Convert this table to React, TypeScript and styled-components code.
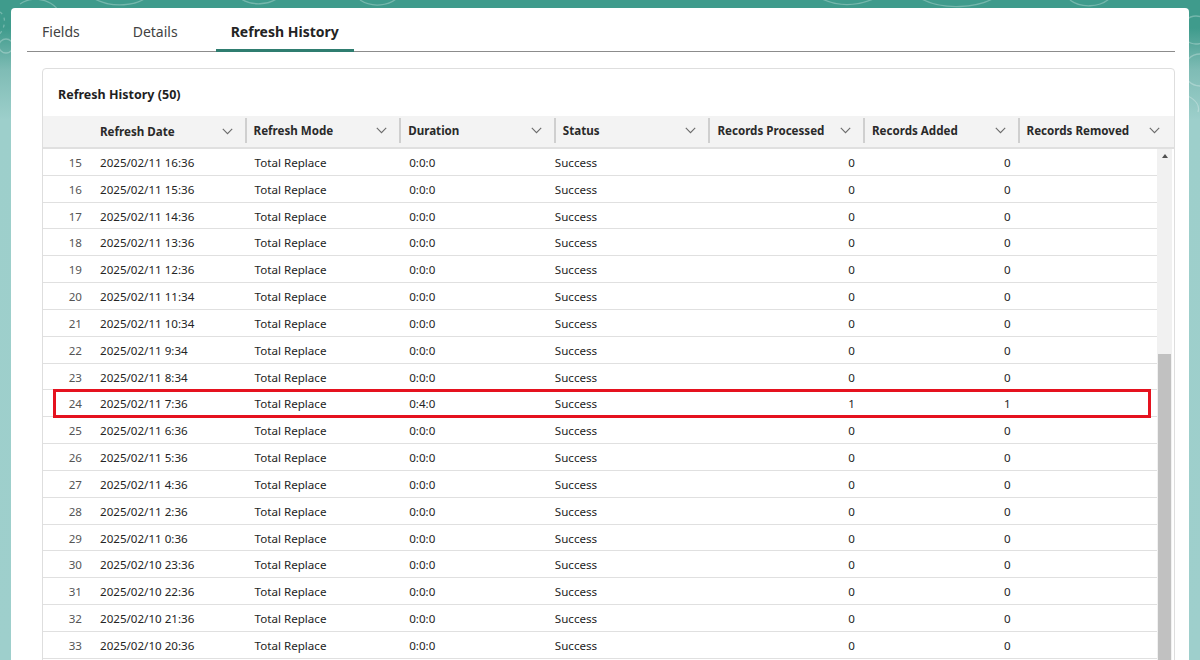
import React from "react";
import styled, { createGlobalStyle } from "styled-components";

const Global = createGlobalStyle`
  html, body { margin: 0; padding: 0; height: 660px; overflow: hidden; }
  body { font-family: "Noto Sans", "Open Sans", sans-serif; color: #242424; }
  * { box-sizing: border-box; }
`;

const Page = styled.div`
  position: relative;
  width: 1200px;
  height: 660px;
  overflow: hidden;
  padding: 8px 11px 0 11px;
  background: linear-gradient(180deg, #3f9b8c 0px, #3f9b8c 28px, #7fbcb5 70px, #9dcfcb 120px, #9ecfcc 100%);
`;

const Decor = styled.svg`
  position: absolute;
  left: 0;
  top: 0;
  width: 1200px;
  height: 140px;
  z-index: 0;
`;

const Panel = styled.div`
  position: relative;
  z-index: 1;
  height: 700px;
  background: #ffffff;
  border-radius: 4px;
  padding: 0 14px 0 16px;
`;

const Tabs = styled.div`
  display: flex;
  gap: 23px;
  height: 44px;
  border-bottom: 1px solid #8c8c8c;
`;

const Tab = styled.div<{ $active?: boolean }>`
  position: relative;
  display: flex;
  align-items: center;
  padding: 3px 15px 0 15px;
  font-size: 14px;
  font-weight: ${(p) => (p.$active ? 700 : 400)};
  color: ${(p) => (p.$active ? "#242424" : "#424242")};
  &::after {
    content: "";
    position: absolute;
    left: 0;
    right: 0;
    bottom: -1px;
    height: 3px;
    background: ${(p) => (p.$active ? "#2f7d70" : "transparent")};
  }
`;

const Content = styled.div`
  padding: 16px 0 0 15px;
`;

const Card = styled.div`
  border: 1px solid #dedede;
  border-radius: 4px;
  height: 620px;
  overflow: hidden;
`;

const CardTitle = styled.div`
  height: 47px;
  display: flex;
  align-items: center;
  padding: 4px 0 0 15px;
  font-size: 12.5px;
  font-weight: 700;
  color: #1f1f1f;
`;

const HeaderRow = styled.div`
  display: grid;
  grid-template-columns: 47px repeat(7, 154.6px);
  height: 33px;
  background: #f3f3f3;
  border-bottom: 2px solid #e0e0e0;
`;

const HeadCell = styled.div<{ $sep?: boolean }>`
  position: relative;
  display: flex;
  align-items: center;
  justify-content: space-between;
  padding: 0 12px 1px ${(p) => (p.$sep ? 7 : 10)}px;
  font-size: 11.6px;
  font-weight: 700;
  color: #2a2a2a;
  border-left: ${(p) => (p.$sep ? "2px solid #cfcfcf" : "none")};
  margin: ${(p) => (p.$sep ? "2px 0 4px 0" : "0")};
  white-space: nowrap;
`;

const BodyWrap = styled.div`
  display: flex;
  height: 520px;
`;

const Rows = styled.div`
  width: 1114px;
`;

const Row = styled.div`
  position: relative;
  display: grid;
  grid-template-columns: 47px repeat(6, 154.6px) 139.4px;
  height: 26.83px;
  padding-top: 1px;
  align-items: center;
  border-bottom: 1px solid #e0e0e0;
  font-size: 11.6px;
  color: #242424;
`;

const Cell = styled.div<{ $align?: "left" | "right"; $pl?: number; $pr?: number; $muted?: boolean }>`
  text-align: ${(p) => p.$align || "left"};
  padding-left: ${(p) => (p.$pl ?? 10)}px;
  padding-right: ${(p) => (p.$pr ?? 0)}px;
  color: ${(p) => (p.$muted ? "#555555" : "#242424")};
  white-space: nowrap;
`;

const Highlight = styled.div`
  position: absolute;
  left: 10px;
  right: 6px;
  top: -1px;
  bottom: -2px;
  border: 3px solid #e5121f;
  pointer-events: none;
`;

const Scrollbar = styled.div`
  position: relative;
  width: 15px;
  background: #f1f1f1;
  display: flex;
  flex-direction: column;
  align-items: center;
`;

const ScrollArrow = styled.div`
  margin-top: 5px;
  width: 0;
  height: 0;
  border-left: 3.5px solid transparent;
  border-right: 3.5px solid transparent;
  border-bottom: 4px solid #505050;
`;

const Thumb = styled.div`
  position: absolute;
  left: 1px;
  right: 1px;
  top: 205px;
  bottom: 0;
  background: #c1c1c1;
`;

const Chevron = () => (
  <svg width="11" height="7" viewBox="0 0 11 7">
    <polyline points="0.8,0.8 5.5,5.6 10.2,0.8" fill="none" stroke="#6b6b6b" strokeWidth="1.1" />
  </svg>
);

const columns = [
  "Refresh Date",
  "Refresh Mode",
  "Duration",
  "Status",
  "Records Processed",
  "Records Added",
  "Records Removed",
];

type R = { n: number; date: string; dur: string; proc: number; add: number };

const times: [string, string][] = [
  ["11", "16:36"],
  ["11", "15:36"],
  ["11", "14:36"],
  ["11", "13:36"],
  ["11", "12:36"],
  ["11", "11:34"],
  ["11", "10:34"],
  ["11", "9:34"],
  ["11", "8:34"],
  ["11", "7:36"],
  ["11", "6:36"],
  ["11", "5:36"],
  ["11", "4:36"],
  ["11", "2:36"],
  ["11", "0:36"],
  ["10", "23:36"],
  ["10", "22:36"],
  ["10", "21:36"],
  ["10", "20:36"],
];

const rows: R[] = times.map(([d, t], i) => {
  const n = 15 + i;
  const hit = n === 24;
  return {
    n,
    date: `2025/02/${d} ${t}`,
    dur: hit ? "0:4:0" : "0:0:0",
    proc: hit ? 1 : 0,
    add: hit ? 1 : 0,
  };
});

export default function App() {
  return (
    <>
      <Global />
      <Page>
        <Decor viewBox="0 0 1200 140" fill="none" stroke="#ffffff" strokeOpacity="0.28" strokeWidth="1.3">
          <path d="M20 4 C 40 -10, 70 10, 55 22" />
          <path d="M0 12 C 8 18, 4 30, -2 36" strokeDasharray="3 4" />
          <circle cx="6" cy="46" r="7" />
          <path d="M90 -4 C 110 10, 140 6, 150 -6" />
          <path d="M240 -2 C 250 6, 270 6, 280 -4" />
          <path d="M360 0 C 372 8, 390 6, 398 -3" />
          <path d="M820 -2 C 840 8, 860 6, 880 -4" />
          <path d="M920 -2 C 940 10, 980 10, 1000 -6" />
          <path d="M1070 0 C 1080 8, 1100 8, 1110 -2" />
          <circle cx="1196" cy="30" r="14" />
          <circle cx="1200" cy="70" r="16" />
          <path d="M1188 96 C 1196 100, 1200 106, 1198 112" />
        </Decor>
        <Panel>
          <Tabs>
            <Tab>Fields</Tab>
            <Tab>Details</Tab>
            <Tab $active>Refresh History</Tab>
          </Tabs>
          <Content>
            <Card>
              <CardTitle>Refresh History (50)</CardTitle>
              <HeaderRow>
                <HeadCell />
                {columns.map((c, i) => (
                  <HeadCell key={c} $sep={i > 0}>
                    <span>{c}</span>
                    <Chevron />
                  </HeadCell>
                ))}
              </HeaderRow>
              <BodyWrap>
                <Rows>
                  {rows.map((r) => (
                    <Row key={r.n}>
                      <Cell $align="right" $pl={0} $pr={8} $muted>
                        {r.n}
                      </Cell>
                      <Cell>{r.date}</Cell>
                      <Cell>Total Replace</Cell>
                      <Cell>{r.dur}</Cell>
                      <Cell $pl={1}>Success</Cell>
                      <Cell $align="right" $pl={0} $pr={8}>
                        {r.proc}
                      </Cell>
                      <Cell $align="right" $pl={0} $pr={7}>
                        {r.add}
                      </Cell>
                      <Cell />
                      {r.n === 24 && <Highlight />}
                    </Row>
                  ))}
                </Rows>
                <Scrollbar>
                  <ScrollArrow />
                  <Thumb />
                </Scrollbar>
              </BodyWrap>
            </Card>
          </Content>
        </Panel>
      </Page>
    </>
  );
}
